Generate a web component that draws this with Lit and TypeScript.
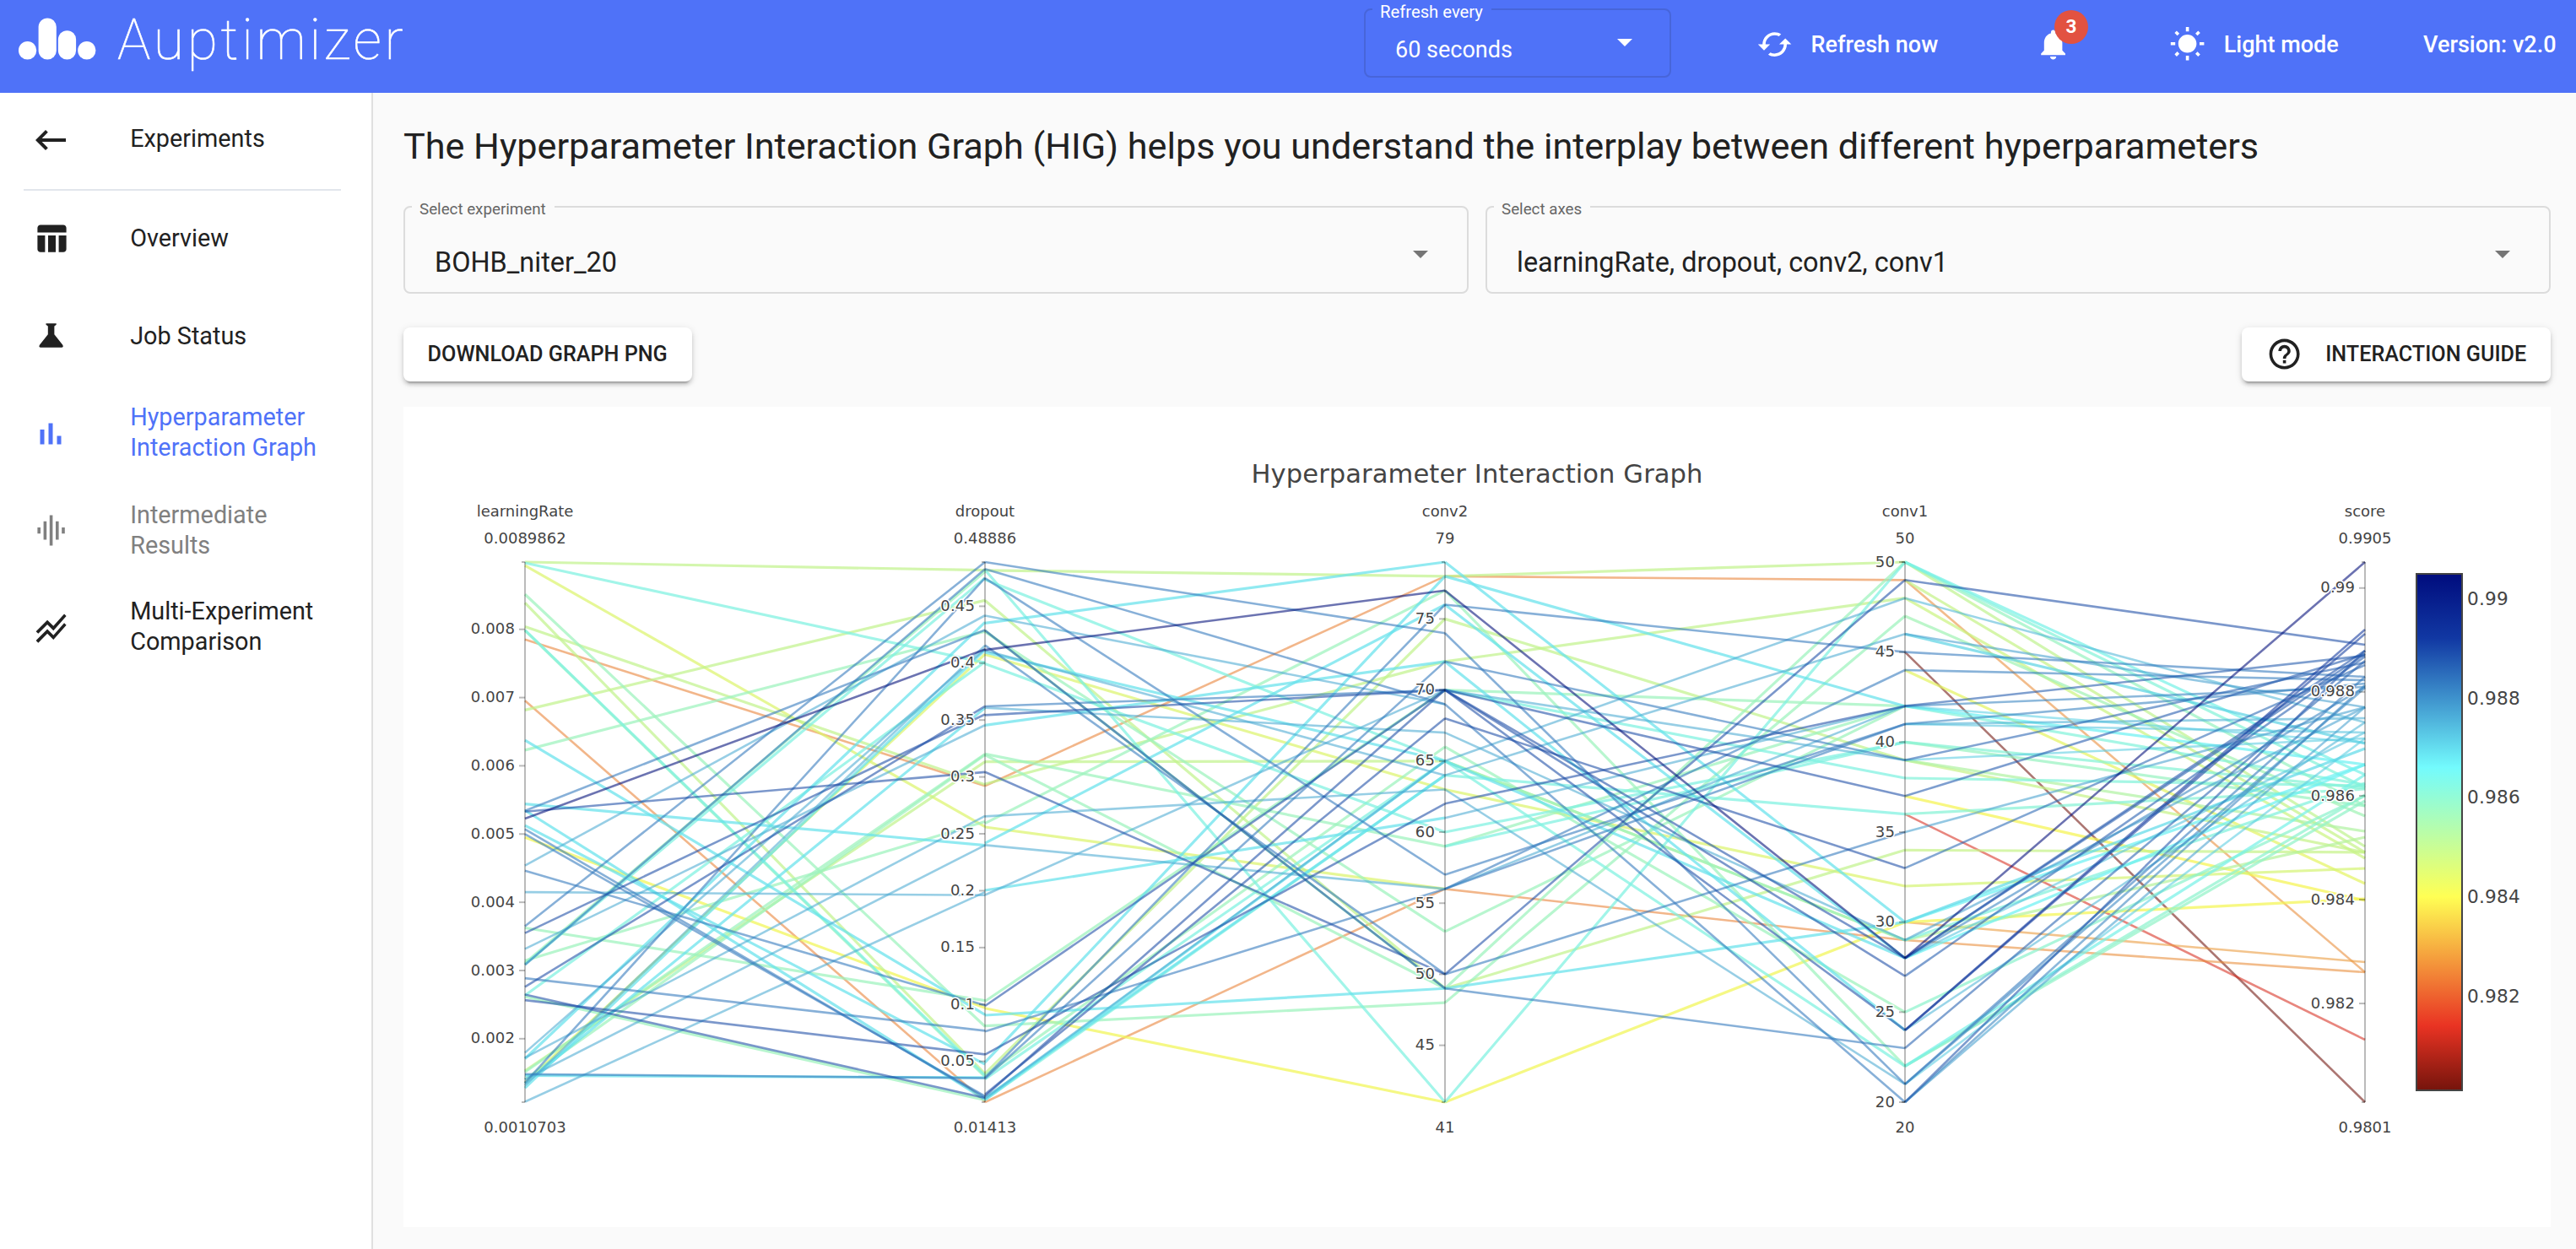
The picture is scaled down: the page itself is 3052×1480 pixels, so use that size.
import { LitElement, html, css, svg, nothing } from "lit";
import { customElement, property } from "lit/decorators.js";
import { classMap } from "lit/directives/class-map.js";

const ICONS: Record<string, string> = {
  back: "M21 11H6.83l3.58-3.59L9 6l-6 6 6 6 1.41-1.41L6.83 13H21z",
  table: "M10 10.02h5V21h-5zM17 21h3c1.1 0 2-.9 2-2v-9h-5v11zm3-18H5c-1.1 0-2 .9-2 2v3h19V5c0-1.1-.9-2-2-2zM3 19c0 1.1.9 2 2 2h3V10H3v9z",
  flask: "M8.6 4h6.8v.9l-1.3 1V11.2l5.4 6.9c.6.9.5 1.7-.4 1.7H4.9c-.9 0-1-.8-.4-1.7l5.4-6.9V5.9l-1.3-1z",
  bars: "M7 10h2v7H7zM11 7h2v10h-2zM15 13h2v4h-2z",
  wave: "M7 18h2V6H7v12zm4 4h2V2h-2v20zm-8-8h2v-4H3v4zm12 4h2V6h-2v12zm4-8v4h2v-4h-2z",
  lines: "M2 19.99l7.5-7.51 4 4 7.09-7.97L22 9.92l-8.5 9.56-4-4-6 6.01-1.5-1.5zm1.5-4.5l6-6.01 4 4L22 3.92l-1.41-1.41-7.09 7.97-4-4L2 13.99l1.5 1.5z",
  refresh: "M19 8l-4 4h3c0 3.31-2.69 6-6 6-1.01 0-1.97-.25-2.8-.7l-1.46 1.46C8.97 19.54 10.43 20 12 20c4.42 0 8-3.58 8-8h3l-4-4zM6 12c0-3.31 2.69-6 6-6 1.01 0 1.97.25 2.8.7l1.46-1.46C15.03 4.46 13.57 4 12 4c-4.42 0-8 3.58-8 8H1l4 4 4-4H6z",
  bell: "M12 22c1.1 0 2-.9 2-2h-4c0 1.1.89 2 2 2zm6-6v-5c0-3.07-1.64-5.64-4.5-6.32V4c0-.83-.67-1.5-1.5-1.5s-1.5.67-1.5 1.5v.68C7.63 5.36 6 7.92 6 11v5l-2 2v1h16v-1l-2-2z",
  sun: "M6.76 4.84l-1.8-1.79-1.41 1.41 1.79 1.79 1.42-1.41zM4 10.5H1v2h3v-2zm9-9.95h-2V3.5h2V.55zm7.45 3.91l-1.41-1.41-1.79 1.79 1.41 1.41 1.79-1.79zm-3.21 13.7l1.79 1.8 1.41-1.41-1.8-1.79-1.4 1.4zM20 10.5v2h3v-2h-3zm-8-5c-3.31 0-6 2.69-6 6s2.69 6 6 6 6-2.69 6-6-2.69-6-6-6zm-1 16.95h2V19.5h-2v2.95zm-7.45-3.91l1.41 1.41 1.79-1.8-1.41-1.41-1.79 1.8z",
  help: "M11 18h2v-2h-2v2zm1-16C6.48 2 2 6.48 2 12s4.48 10 10 10 10-4.48 10-10S17.52 2 12 2zm0 18c-4.41 0-8-3.59-8-8s3.59-8 8-8 8 3.59 8 8-3.59 8-8 8zm0-14c-2.21 0-4 1.79-4 4h2c0-1.1.9-2 2-2s2 .9 2 2c0 2-3 1.75-3 5h2c0-2.25 3-2.5 3-5 0-2.21-1.79-4-4-4z",
};
const icon = (name: string) => html`<svg class="icon icon-${name}" viewBox="0 0 24 24"><path d=${ICONS[name]} /></svg>`;

/* ---------- chart ---------- */
const TOP = 666;
const BOTTOM = 1306;

interface Axis { x: number; name: string; max: string; min: string; hi: number; lo: number; ticks: string[]; }
const AXES: Axis[] = [
  { x: 622, name: "learningRate", max: "0.0089862", min: "0.0010703", hi: 0.0089862, lo: 0.0010703, ticks: ["0.008", "0.007", "0.006", "0.005", "0.004", "0.003", "0.002"] },
  { x: 1167, name: "dropout", max: "0.48886", min: "0.01413", hi: 0.48886, lo: 0.01413, ticks: ["0.45", "0.4", "0.35", "0.3", "0.25", "0.2", "0.15", "0.1", "0.05"] },
  { x: 1712, name: "conv2", max: "79", min: "41", hi: 79, lo: 41, ticks: ["75", "70", "65", "60", "55", "50", "45"] },
  { x: 2257, name: "conv1", max: "50", min: "20", hi: 50, lo: 20, ticks: ["50", "45", "40", "35", "30", "25", "20"] },
  { x: 2802, name: "score", max: "0.9905", min: "0.9801", hi: 0.9905, lo: 0.9801, ticks: ["0.99", "0.988", "0.986", "0.984", "0.982"] },
];
const pos = (v: number, hi: number, lo: number) => TOP + ((hi - v) / (hi - lo)) * (BOTTOM - TOP);

/* Colour scale, best score first. */
const SCALE: [number, number[]][] = [
  [0, [0, 12, 125]], [0.125, [17, 56, 163]], [0.375, [115, 251, 253]],
  [0.625, [255, 255, 84]], [0.875, [233, 51, 35]], [1, [117, 20, 12]],
];
/* Lines are a touch deeper than the scale so that they hold up on white. */
const SHADE = 0.96;
const colorAt = (y: number) => {
  const t = Math.min(1, Math.max(0, (y - TOP) / (BOTTOM - TOP)));
  let i = 1;
  while (i < SCALE.length - 1 && t > SCALE[i][0]) i++;
  const [a, ca] = SCALE[i - 1];
  const [b, cb] = SCALE[i];
  const k = (t - a) / (b - a);
  return `rgb(${ca.map((c, j) => Math.round((c + (cb[j] - c) * k) * SHADE)).join(",")})`;
};
/* Score bands: position of each band on the score axis. */
const BAND: Record<string, number> = { n: 668, d: 764, b: 802, l: 846, c: 893, a: 925, g: 960, m: 1005, y: 1038, Y: 1062, o: 1160, r: 1235, R: 1306 };

interface Stage { from: [number, number]; to: [number, number]; rows: string; }
const STAGES: Stage[] = [
  { from: [168, 1423], to: [168, 1423], rows:
    "m168,187 a170,402 y176,783 g243,1247 m263,1357 m318,685 a326,1361 g327,1364 o348,688 o490,1422 m512,257 g605,329 c582,1220 c730,826 b746,326 d748,656 n764,371 c745,1417 l873,292 b885,1198 l935,942 b1014,168 d1030,522 g1018,1187 l1067,547 b1104,184 g1100,190 a1103,205 g1094,771 d1155,503 b1135,1257 d1173,1413 g1178,1418 d1186,1312 a1175,400 c780,1335 b789,1412 b800,1409 Y808,1204 l1308,370 c1322,308 l1320,758 m1350,632 g1353,614 g1370,616 b1358,1367 c1361,1366 y1378,382 b1378,205 l1384,362 l1422,935 c1380,507 l1370,826 c1390,372" },
  { from: [265, 1433], to: [79, 41], rows:
    "b265,74 b280,69 b300,57 m283,78 a282,41 a303,65 m348,49 l381,69 c397,79 d413,49 g416,53 b445,50 n455,77 y465,63 c460,65 l456,64 a485,60 g413,49 b577,70 l580,67 d596,70 c618,72 g680,59 g682,49 m697,65 m745,72 o749,78 d719,50 l815,63 g830,77 y838,56 c873,76 l877,56 c975,61 l985,70 g1215,70 d1225,70 Y1230,41 c1245,49 g1268,48 b1280,56 d1330,62 c1347,78 m1371,75 g1375,66 b1380,76 a1383,65 b1382,72 d1416,68 d1420,70 c1424,64 a1428,64 c1428,65 l1425,65 o1433,56" },
  { from: [79, 41], to: [50, 20], rows:
    "c79,30 m78,50 o78,49 c78,42 n77,28 g77,22 b76,45 c76,28 m75,39 b74,21 m72,48 b72,39 c72,24 d70,28 d70,24 d70,27 d70,37 l70,39 a70,38 g70,42 b69,20 d68,33 l67,29 g66,25 l65,48 m65,29 g65,29 a65,22 c65,28 a64,36 l64,46 y63,32 l63,21 d62,42 l61,42 a60,40 g59,42 a59,40 b57,41 o56,29 b56,44 b56,41 l56,42 g53,42 d50,49 b50,35 m49,34 c49,30 b49,23 g49,50 g48,47 a41,50 Y41,30" },
];
/* Last stage: conv1 value followed by the position on the score axis. */
const SCORES = "50:933 50:955 50:918 50:1003 49:764 49:1152 49:1010 48:856 48:1017 47:967 46:881 46:838 45:802 45:1306 44:806 44:1047 42:777 42:814 42:880 42:906 42:930 41:810 41:868 41:851 40:934 40:955 39:785 39:875 39:985 39:1010 38:931 37:775 37:1067 36:935 36:1232 35:838 34:1010 33:788 32:1029 30:887 30:906 30:1065 30:1140 29:1152 29:992 29:838 29:928 28:666 28:771 28:775 28:906 28:868 28:814 27:778 25:943 24:746 24:751 24:856 23:783 22:942 22:918 22:949 21:802 21:875 21:815 20:771 20:838 20:812";

interface Segment { x1: number; y1: number; x2: number; y2: number; s: number; }
const buildSegments = (): Segment[] => {
  const out: Segment[] = [];
  STAGES.forEach((st, i) => {
    for (const row of st.rows.split(" ")) {
      const [a, b] = row.slice(1).split(",").map(Number);
      out.push({ x1: AXES[i].x, y1: pos(a, ...st.from), x2: AXES[i + 1].x, y2: pos(b, ...st.to), s: BAND[row[0]] });
    }
  });
  for (const row of SCORES.split(" ")) {
    const [w, y] = row.split(":").map(Number);
    out.push({ x1: AXES[3].x, y1: pos(w, 50, 20), x2: AXES[4].x, y2: y, s: y });
  }
  return out.sort((p, q) => q.s - p.s);
};
const SEGMENTS = buildSegments();

@customElement("interaction-chart")
export class InteractionChart extends LitElement {
  static styles = css`
    :host { display: block; height: 972px; background: #fff; }
    svg { display: block; width: 100%; height: 100%; }
    .dark { stroke-width: 2.6; stroke-opacity: 0.58; }
    .light { stroke-width: 3.2; stroke-opacity: 0.72; }
    .axis line { stroke: #000; stroke-opacity: 0.27; stroke-width: 2; }
    text { font-family: Verdana, "DejaVu Sans", sans-serif; fill: #444; }
    .small { font-size: 18px; }
    .tick { font-size: 18px; letter-spacing: 0.15px; stroke: #fff; stroke-width: 3px; stroke-linejoin: round; paint-order: stroke; }
    .title { font-size: 30.6px; }
    .scale { font-size: 21.6px; letter-spacing: 0.2px; }
    .bar { stroke: #444; stroke-width: 2; }
  `;
  render() {
    return html`<svg viewBox="478 482 2544 972">
      <defs>
        <linearGradient id="scale" x1="0" y1="0" x2="0" y2="1">
          ${SCALE.map(([t, c]) => svg`<stop offset=${t} stop-color="rgb(${c.join(",")})" />`)}
        </linearGradient>
      </defs>
      <g>
        ${SEGMENTS.map((l) => svg`<line class=${l.s > 880 && l.s < 1100 ? "light" : "dark"} x1=${l.x1} y1=${l.y1} x2=${l.x2} y2=${l.y2} stroke=${colorAt(l.s)} />`)}
      </g>
      ${AXES.map((a) => svg`<g class="axis">
        <line x1=${a.x} y1=${TOP} x2=${a.x} y2=${BOTTOM} />
        <line x1=${a.x - 4} y1=${TOP} x2=${a.x} y2=${TOP} />
        <line x1=${a.x - 4} y1=${BOTTOM} x2=${a.x} y2=${BOTTOM} />
        ${a.ticks.map((t) => {
          const y = pos(Number(t), a.hi, a.lo);
          return svg`<line x1=${a.x - 7} y1=${y} x2=${a.x} y2=${y} /><text class="tick" text-anchor="end" x=${a.x - 12} y=${y + 5.6}>${t}</text>`;
        })}
        <text class="small" text-anchor="middle" x=${a.x} y="611.5">${a.name}</text>
        <text class="small" text-anchor="middle" x=${a.x} y="643.7">${a.max}</text>
        <text class="small" text-anchor="middle" x=${a.x} y="1342">${a.min}</text>
      </g>`)}
      <text class="title" text-anchor="middle" x="1750" y="571.5" textLength="535">Hyperparameter Interaction Graph</text>
      <rect class="bar" x="2863" y="680" width="54" height="612" fill="url(#scale)" />
      ${["0.99", "0.988", "0.986", "0.984", "0.982"].map((t, i) => svg`<text class="scale" x="2923" y=${717 + i * 117.7}>${t}</text>`)}
    </svg>`;
  }
}

@customElement("outlined-select")
export class OutlinedSelect extends LitElement {
  @property() label = "";
  @property() value = "";
  static styles = css`
    :host { display: block; }
    .box { position: relative; box-sizing: border-box; height: 100%; display: flex; align-items: center;
      border: 2px solid var(--outline, #dcdcdc); border-radius: 8px;
      padding: var(--drop, 30px) var(--end, 46px) 0 35px; font-size: var(--size, 32.4px); }
    .label { position: absolute; left: 8px; top: -8.4px; padding: 0 10px 0 9px; line-height: 20px;
      font-size: var(--label-size, 18.75px); color: var(--label-color, #666); background: var(--surface, #fafafa); }
    .value { white-space: nowrap; }
    .arrow { width: 18px; height: 9px; margin-left: auto; margin-bottom: var(--lift, 20px); fill: var(--arrow, #757575); }
  `;
  render() {
    return html`<div class="box">
      <span class="label">${this.label}</span>
      <span class="value">${this.value}</span>
      <svg class="arrow" viewBox="0 0 18 9"><path d="M0 0h18L9 9z" /></svg>
    </div>`;
  }
}

const NAV = [
  { icon: "back", label: ["Experiments"], cls: "experiments" },
  { icon: "table", label: ["Overview"], cls: "overview" },
  { icon: "flask", label: ["Job Status"], cls: "jobs" },
  { icon: "bars", label: ["Hyperparameter", "Interaction Graph"], cls: "hig" },
  { icon: "wave", label: ["Intermediate", "Results"], cls: "intermediate" },
  { icon: "lines", label: ["Multi-Experiment", "Comparison"], cls: "multi" },
];

@customElement("app-root")
export class AppRoot extends LitElement {
  static styles = css`
    :host { display: flex; flex-direction: column; width: 3052px; height: 1480px; overflow: hidden;
      background: #fafafa; color: #212121; font-family: Roboto, "Liberation Sans", sans-serif; }
    .icon { display: block; width: 43.2px; height: 43.2px; flex: none; fill: currentColor; overflow: visible; }

    header { display: flex; flex: none; height: 110px; background: #4f72f8; color: #fff; font-size: 27px; }
    .brand { display: flex; width: 1616px; flex: none; align-items: flex-start; }
    .logo { width: 92px; height: 50px; margin: 20.5px 0 0 22px; fill: #fff; flex: none; }
    .name { margin: 8.5px 0 0 25px; line-height: 77.4px; font-size: 66px; font-weight: 100; letter-spacing: 3.75px;
      -webkit-text-stroke: 0.6px #fff; }
    .every { width: 364px; height: 82px; margin-top: 10px; flex: none;
      --outline: #4765d9; --drop: 15.6px; --end: 44px; --size: 27px; --label-size: 20.25px; --label-color: #fff;
      --surface: #4f72f8; --lift: 16px; --arrow: #fff; }
    .tools { display: flex; flex: 1; align-items: center; height: 105.2px; padding: 0 23.5px 0 100.8px; font-weight: 500; white-space: nowrap; }
    .tool { display: flex; align-items: center; gap: 21.5px; flex: none; }
    .refresh { width: 330.6px; }
    .alerts { position: relative; width: 158.6px; }
    .badge { position: absolute; left: 22.6px; top: -19px; width: 40px; height: 40px; border-radius: 50%; background: #e25241;
      font-size: 22.5px; line-height: 38px; font-weight: 700; text-align: center; }
    .version { margin-left: auto; }

    .body { display: flex; flex: 1; min-height: 0; }
    nav { width: 440px; flex: none; background: #fff; border-right: 2px solid #e0e0e0; font-size: 28.8px; line-height: 36px; }
    .item { display: flex; align-items: center; gap: 72.4px; padding-left: 38.6px; box-sizing: border-box; }
    .item span { display: block; white-space: nowrap; }
    .experiments { height: 107.4px; margin-bottom: 6.6px; }
    .icon-back { width: 48px; height: 48px; margin: 5px -2.4px 0; }
    .divider { height: 2px; margin: 0 36px 0 28px; background: #e2e6ec; }
    .overview { height: 113px; }
    .jobs { height: 118px; }
    .hig { height: 109.4px; color: #4f72f8; }
    .icon-bars { width: 60px; height: 60px; margin: 5.6px -8.4px 0; }
    .intermediate { height: 123.6px; color: #808080; }
    .multi { height: 104.4px; }
    .icon-lines { margin-top: 4px; }

    main { flex: 1; min-width: 0; padding: 31.5px 30px 0 36px; }
    h1 { margin: 0 0 38.5px; font-size: 43.2px; line-height: 64px; font-weight: 400; white-space: nowrap; letter-spacing: -0.02px; }
    .selects { display: grid; grid-template-columns: 1fr 1fr; gap: 20px; height: 104px; }
    .actions { display: flex; justify-content: space-between; margin: 40px 0 30px; }
    .button { display: flex; align-items: center; box-sizing: border-box; height: 64px; padding: 0 28.6px; gap: 27.4px; border-radius: 8px;
      background: #fff; font-size: 25.2px; font-weight: 500; white-space: nowrap;
      box-shadow: 0 6px 2px -4px rgba(0,0,0,.2), 0 4px 4px rgba(0,0,0,.14), 0 2px 10px rgba(0,0,0,.12); }
    .download { width: 342px; }
    .guide { width: 366px; }
    .button span { margin-top: -1px; }
  `;
  render() {
    return html`
      <header>
        <div class="brand">
          <svg class="logo" viewBox="0 0 92 50">
            <rect x="0" y="28" width="21.2" height="21.6" rx="10.6" />
            <rect x="23.6" y="0.5" width="21.2" height="49.1" rx="10.6" />
            <rect x="46.9" y="15.2" width="21.2" height="34.4" rx="10.6" />
            <rect x="70.2" y="28" width="21.2" height="21.6" rx="10.6" />
          </svg>
          <span class="name">Auptimizer</span>
        </div>
        <outlined-select class="every" label="Refresh every" value="60 seconds"></outlined-select>
        <div class="tools">
          <div class="tool refresh">${icon("refresh")}<span>Refresh now</span></div>
          <div class="tool alerts">${icon("bell")}<span class="badge">3</span></div>
          <div class="tool">${icon("sun")}<span>Light mode</span></div>
          <span class="version">Version: v2.0</span>
        </div>
      </header>
      <div class="body">
        <nav>
          ${NAV.map((n, i) => html`
            <div class=${classMap({ item: true, [n.cls]: true })}>
              ${icon(n.icon)}
              <div>${n.label.map((l) => html`<span>${l}</span>`)}</div>
            </div>
            ${i === 0 ? html`<div class="divider"></div>` : nothing}`)}
        </nav>
        <main>
          <h1>The Hyperparameter Interaction Graph (HIG) helps you understand the interplay between different hyperparameters</h1>
          <div class="selects">
            <outlined-select label="Select experiment" value="BOHB_niter_20"></outlined-select>
            <outlined-select label="Select axes" value="learningRate, dropout, conv2, conv1"></outlined-select>
          </div>
          <div class="actions">
            <div class="button download"><span>DOWNLOAD GRAPH PNG</span></div>
            <div class="button guide">${icon("help")}<span>INTERACTION GUIDE</span></div>
          </div>
          <interaction-chart></interaction-chart>
        </main>
      </div>`;
  }
}
